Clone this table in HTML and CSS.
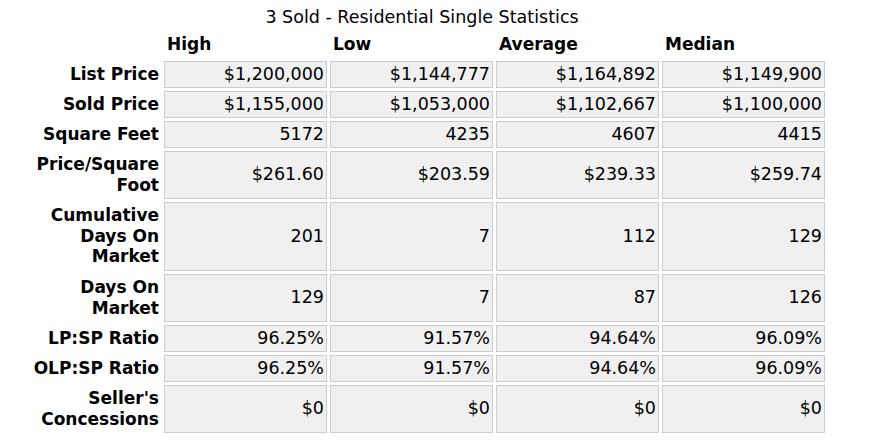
FILE: index.html
```html
<!DOCTYPE html>
<html>
<head>
<meta charset="utf-8">
<title>3 Sold - Residential Single Statistics</title>
<link rel="stylesheet" href="styles.css">
</head>
<body>
<table class="stats">
  <caption class="stats-title">3 Sold - Residential Single Statistics</caption>
  <colgroup>
    <col class="col-label">
    <col class="col-data">
    <col class="col-data">
    <col class="col-data">
    <col class="col-data">
  </colgroup>
  <thead>
    <tr>
      <th class="corner"></th>
      <th class="head">High</th>
      <th class="head">Low</th>
      <th class="head">Average</th>
      <th class="head">Median</th>
    </tr>
  </thead>
  <tbody>
    <tr><th class="label">List Price</th><td class="val">$1,200,000</td><td class="val">$1,144,777</td><td class="val">$1,164,892</td><td class="val">$1,149,900</td></tr>
    <tr><th class="label">Sold Price</th><td class="val">$1,155,000</td><td class="val">$1,053,000</td><td class="val">$1,102,667</td><td class="val">$1,100,000</td></tr>
    <tr><th class="label">Square Feet</th><td class="val">5172</td><td class="val">4235</td><td class="val">4607</td><td class="val">4415</td></tr>
    <tr class="lines-2"><th class="label">Price/Square Foot</th><td class="val">$261.60</td><td class="val">$203.59</td><td class="val">$239.33</td><td class="val">$259.74</td></tr>
    <tr class="lines-3"><th class="label">Cumulative Days On Market</th><td class="val">201</td><td class="val">7</td><td class="val">112</td><td class="val">129</td></tr>
    <tr class="lines-2"><th class="label">Days On Market</th><td class="val">129</td><td class="val">7</td><td class="val">87</td><td class="val">126</td></tr>
    <tr><th class="label">LP:SP Ratio</th><td class="val">96.25%</td><td class="val">91.57%</td><td class="val">94.64%</td><td class="val">96.09%</td></tr>
    <tr><th class="label">OLP:SP Ratio</th><td class="val">96.25%</td><td class="val">91.57%</td><td class="val">94.64%</td><td class="val">96.09%</td></tr>
    <tr class="lines-2"><th class="label">Seller's Concessions</th><td class="val">$0</td><td class="val">$0</td><td class="val">$0</td><td class="val">$0</td></tr>
  </tbody>
</table>
</body>
</html>
```

FILE: styles.css
```css
html, body {
  background: #ffffff;
}

body {
  margin: 8px 8px 8px 13px;
  font-family: "DejaVu Sans", Verdana, sans-serif;
  font-size: 17.5px;
  line-height: 20.5px;
  color: #000000;
}

.stats {
  table-layout: fixed;
  width: 815px;
  border-collapse: separate;
  border-spacing: 3px;
  margin-top: -3px;
}

.stats-title {
  caption-side: top;
  text-align: center;
  font-weight: normal;
  padding: 2px 0 0 3px;
}

.col-label {
  width: 145px;
}

.col-data {
  width: 163px;
}

.stats th,
.stats td {
  box-sizing: border-box;
  padding: 2.25px 2px;
  line-height: 20.5px;
  vertical-align: middle;
}

.lines-2 th,
.lines-2 td {
  height: 48px;
}

.lines-3 th,
.lines-3 td {
  height: 69px;
}

.head {
  text-align: left;
  font-weight: bold;
  font-size: 17px;
  border: 1px solid transparent;
}

.label {
  text-align: right;
  font-weight: bold;
  font-size: 17px;
  padding-right: 2px;
  padding-left: 0;
}

.val {
  text-align: right;
  background: #f0f0f0;
  border: 1px solid #cccccc;
}
```
